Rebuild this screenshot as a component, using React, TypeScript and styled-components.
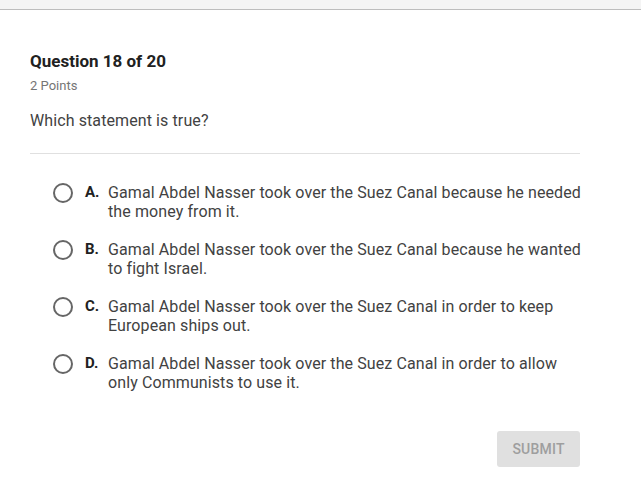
import React from "react";
import styled, { createGlobalStyle } from "styled-components";

const Global = createGlobalStyle`
  html, body { margin: 0; padding: 0; background: #fff; }
  body { font-family: Roboto, "Liberation Sans", Arial, sans-serif; color: #212121; }
`;

const TopBar = styled.div`
  height: 9px;
  background: #f4f4f4;
  border-bottom: 1px solid #bdbdbd;
`;

const Card = styled.div`
  width: 570px;
  padding: 41px 0 0 30px;
`;

const Title = styled.h1`
  margin: 0;
  font-size: 17px;
  font-weight: 700;
  line-height: 20px;
  color: #212121;
`;

const Points = styled.div`
  margin-top: 7px;
  font-size: 13px;
  line-height: 16px;
  color: #757575;
`;

const Prompt = styled.div`
  margin-top: 17px;
  font-size: 16px;
  line-height: 20px;
  color: #424242;
  letter-spacing: 0.1px;
`;

const Divider = styled.hr`
  width: 550px;
  margin: 22px 0 0;
  border: 0;
  border-top: 1px solid #e0e0e0;
`;

const Options = styled.div`
  display: flex;
  flex-direction: column;
  gap: 19px;
  padding: 29px 0 0 23px;
`;

const Option = styled.label`
  display: flex;
  align-items: flex-start;
  cursor: pointer;
`;

const Radio = styled.span`
  flex: none;
  width: 16px;
  height: 16px;
  border: 2px solid #666;
  border-radius: 50%;
  margin-right: 12px;
`;

const Letter = styled.span`
  flex: none;
  width: 23px;
  font-weight: 700;
  font-size: 15px;
  line-height: 19px;
  color: #212121;
`;

const Text = styled.span`
  flex: none;
  font-size: 16px;
  line-height: 19px;
  letter-spacing: 0.1px;
  color: #424242;
  width: 480px;
`;

const Footer = styled.div`
  display: flex;
  justify-content: flex-end;
  width: 550px;
  margin-top: 39px;
`;

const Submit = styled.button`
  width: 83px;
  height: 36px;
  border: 0;
  border-radius: 3px;
  background: #e0e0e0;
  color: #9e9e9e;
  font-family: inherit;
  font-size: 14px;
  font-weight: 500;
  letter-spacing: 0.2px;
`;

const options = [
  ["A.", "Gamal Abdel Nasser took over the Suez Canal because he needed the money from it."],
  ["B.", "Gamal Abdel Nasser took over the Suez Canal because he wanted to fight Israel."],
  ["C.", "Gamal Abdel Nasser took over the Suez Canal in order to keep European ships out."],
  ["D.", "Gamal Abdel Nasser took over the Suez Canal in order to allow only Communists to use it."],
];

export default function App() {
  return (
    <>
      <Global />
      <TopBar />
      <Card>
        <Title>Question 18 of 20</Title>
        <Points>2 Points</Points>
        <Prompt>Which statement is true?</Prompt>
        <Divider />
        <Options>
          {options.map(([l, t]) => (
            <Option key={l}>
              <Radio />
              <Letter>{l}</Letter>
              <Text>{t}</Text>
            </Option>
          ))}
        </Options>
        <Footer>
          <Submit disabled>SUBMIT</Submit>
        </Footer>
      </Card>
    </>
  );
}
